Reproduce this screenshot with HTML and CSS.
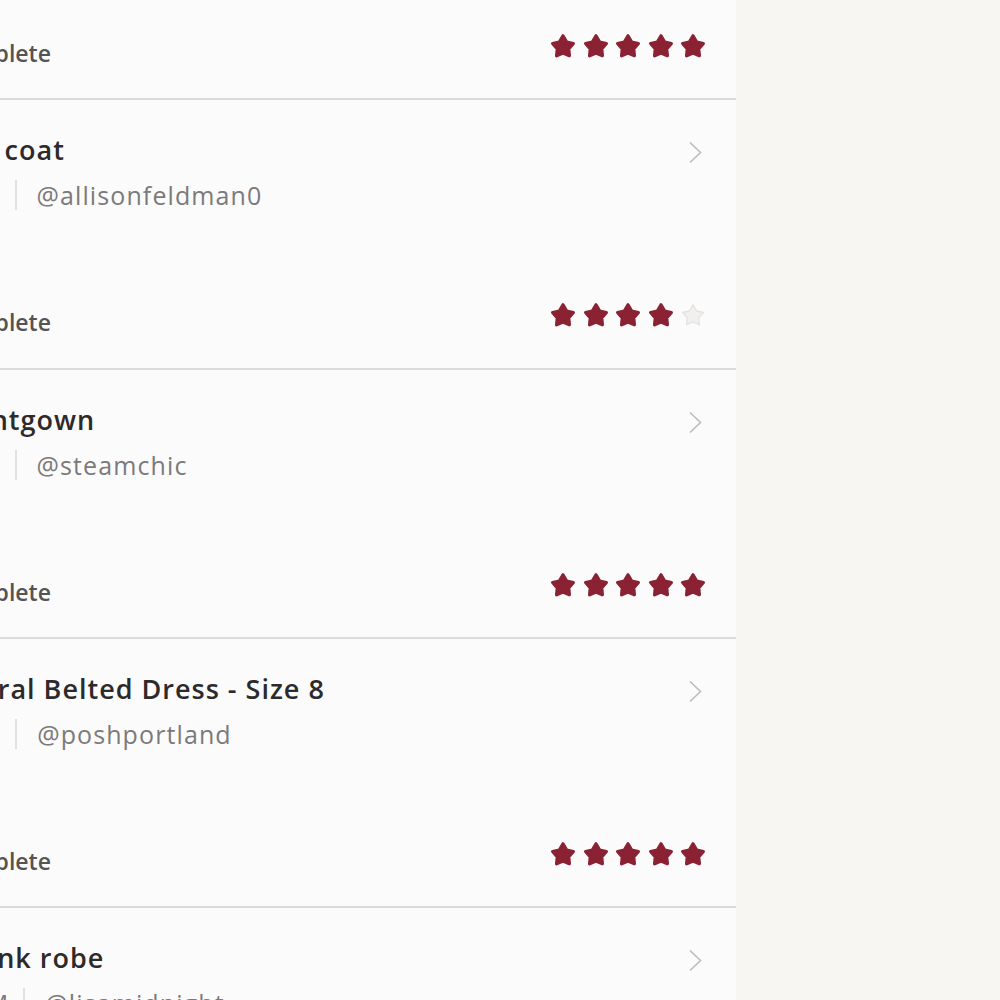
FILE: index.html
```html
<!DOCTYPE html>
<html>
<head>
<meta charset="utf-8">
<link rel="stylesheet" href="styles.css">
</head>
<body>
<svg width="0" height="0" class="defs">
  <defs>
    <path id="star" d="M12 2.6 L15.4 8.3 L21.6 9.7 L17.3 14.6 L17.9 21.0 L12 18.4 L6.1 21.0 L6.7 14.6 L2.4 9.7 L8.6 8.3 Z"/>
    <path id="chev" d="M2 1.5 L12.5 11.5 L2 21.5"/>
  </defs>
</svg>
<div class="page">
  <div class="panel">
    <div class="item">
      <div class="head">
        <div class="info">
          <div class="title">Wrap sweater</div>
          <div class="meta"><span class="size">US M</span><span class="sep"></span><span class="handle">@closetcleanout</span></div>
        </div>
        <svg class="chev" viewBox="0 0 14 23"><use href="#chev"/></svg>
      </div>
      <div class="status"><span class="label">Complete</span>
        <div class="stars">
          <svg class="star on" viewBox="0 0 24 24"><use href="#star"/></svg>
          <svg class="star on" viewBox="0 0 24 24"><use href="#star"/></svg>
          <svg class="star on" viewBox="0 0 24 24"><use href="#star"/></svg>
          <svg class="star on" viewBox="0 0 24 24"><use href="#star"/></svg>
          <svg class="star on" viewBox="0 0 24 24"><use href="#star"/></svg>
        </div>
      </div>
    </div>

    <div class="item">
      <div class="head">
        <div class="info">
          <div class="title">Red coat</div>
          <div class="meta"><span class="size">US S</span><span class="sep"></span><span class="handle">@allisonfeldman0</span></div>
        </div>
        <svg class="chev" viewBox="0 0 14 23"><use href="#chev"/></svg>
      </div>
      <div class="status"><span class="label">Complete</span>
        <div class="stars">
          <svg class="star on" viewBox="0 0 24 24"><use href="#star"/></svg>
          <svg class="star on" viewBox="0 0 24 24"><use href="#star"/></svg>
          <svg class="star on" viewBox="0 0 24 24"><use href="#star"/></svg>
          <svg class="star on" viewBox="0 0 24 24"><use href="#star"/></svg>
          <svg class="star off" viewBox="0 0 24 24"><use href="#star"/></svg>
        </div>
      </div>
    </div>

    <div class="item">
      <div class="head">
        <div class="info">
          <div class="title">Nightgown</div>
          <div class="meta"><span class="size">US S</span><span class="sep"></span><span class="handle">@steamchic</span></div>
        </div>
        <svg class="chev" viewBox="0 0 14 23"><use href="#chev"/></svg>
      </div>
      <div class="status"><span class="label">Complete</span>
        <div class="stars">
          <svg class="star on" viewBox="0 0 24 24"><use href="#star"/></svg>
          <svg class="star on" viewBox="0 0 24 24"><use href="#star"/></svg>
          <svg class="star on" viewBox="0 0 24 24"><use href="#star"/></svg>
          <svg class="star on" viewBox="0 0 24 24"><use href="#star"/></svg>
          <svg class="star on" viewBox="0 0 24 24"><use href="#star"/></svg>
        </div>
      </div>
    </div>

    <div class="item">
      <div class="head">
        <div class="info">
          <div class="title">Choral Belted Dress - Size 8</div>
          <div class="meta"><span class="size">US 8</span><span class="sep"></span><span class="handle">@poshportland</span></div>
        </div>
        <svg class="chev" viewBox="0 0 14 23"><use href="#chev"/></svg>
      </div>
      <div class="status"><span class="label">Complete</span>
        <div class="stars">
          <svg class="star on" viewBox="0 0 24 24"><use href="#star"/></svg>
          <svg class="star on" viewBox="0 0 24 24"><use href="#star"/></svg>
          <svg class="star on" viewBox="0 0 24 24"><use href="#star"/></svg>
          <svg class="star on" viewBox="0 0 24 24"><use href="#star"/></svg>
          <svg class="star on" viewBox="0 0 24 24"><use href="#star"/></svg>
        </div>
      </div>
    </div>

    <div class="item">
      <div class="head">
        <div class="info">
          <div class="title">A pink robe</div>
          <div class="meta"><span class="size">US M</span><span class="sep"></span><span class="handle">@lisamidnight</span></div>
        </div>
        <svg class="chev" viewBox="0 0 14 23"><use href="#chev"/></svg>
      </div>
      <div class="status"><span class="label">Complete</span>
        <div class="stars">
          <svg class="star on" viewBox="0 0 24 24"><use href="#star"/></svg>
          <svg class="star on" viewBox="0 0 24 24"><use href="#star"/></svg>
          <svg class="star on" viewBox="0 0 24 24"><use href="#star"/></svg>
          <svg class="star on" viewBox="0 0 24 24"><use href="#star"/></svg>
          <svg class="star on" viewBox="0 0 24 24"><use href="#star"/></svg>
        </div>
      </div>
    </div>
  </div>
</div>
</body>
</html>
```
FILE: styles.css
```css
html, body {
  margin: 0;
  padding: 0;
  height: 100%;
  overflow: hidden;
  background: #f7f6f3;
}
.defs {
  position: absolute;
  width: 0;
  height: 0;
}
.page {
  display: flex;
  font-family: "Open Sans", Lato, sans-serif;
}
.panel {
  width: 806px;
  margin-left: -70px;
  margin-top: -169px;
  background: #fcfbfb;
  flex: none;
}
.item {
  height: 269.33px;
  box-sizing: border-box;
  border-bottom: 2px solid #dcdadb;
  padding: 33px 30px 0 14px;
  display: flex;
  flex-direction: column;
}
.head {
  display: flex;
  justify-content: space-between;
  align-items: flex-start;
}
.info {
  display: flex;
  flex-direction: column;
}
.title {
  font-size: 27px;
  line-height: 34px;
  font-weight: 600;
  letter-spacing: 1px;
  color: #2c2a2b;
  white-space: nowrap;
}
.meta {
  margin-top: 13px;
  display: flex;
  align-items: center;
  font-size: 25px;
  line-height: 30px;
  letter-spacing: 1.1px;
  color: #7b7a7a;
  white-space: nowrap;
}
.size {
  margin-right: 14px;
}
.sep {
  width: 2px;
  height: 30px;
  background: #e2e0e0;
  margin-right: 20px;
}
.chev {
  width: 14px;
  height: 23px;
  margin-top: 8px;
  margin-right: 4px;
  fill: none;
  stroke: #bdbcbc;
  stroke-width: 1.6;
  flex: none;
}
.status {
  margin-top: 97px;
  display: flex;
  justify-content: space-between;
  align-items: center;
  height: 30px;
}
.label {
  font-size: 23px;
  line-height: 30px;
  font-weight: 600;
  color: #555354;
}
.stars {
  display: flex;
  gap: 6.5px;
  margin-bottom: 14px;
}
.star {
  width: 26px;
  height: 26px;
  stroke-linejoin: round;
  stroke-width: 3;
}
.star.on {
  fill: #8a2233;
  stroke: #8a2233;
}
.star.off {
  fill: #f1f0ee;
  stroke: #e4e2df;
  stroke-width: 1.2;
}
```
